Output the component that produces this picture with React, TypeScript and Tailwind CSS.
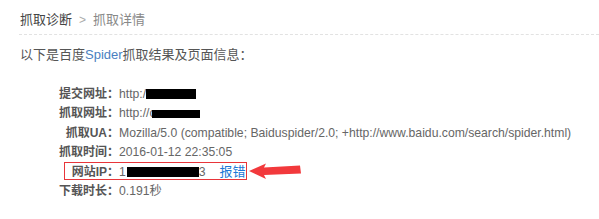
import React from "react";

const font = { fontFamily: '"Liberation Sans", Arial, "Noto Sans CJK SC", sans-serif' };

function Row({ label, children }: { label: string; children: React.ReactNode }) {
  return (
    <div className="flex h-[19.5px] items-center">
      <div className="w-[100px] shrink-0 text-right font-bold text-[12px] text-[#555]">{label}</div>
      <div className="flex items-center text-[12.2px] text-[#666] whitespace-nowrap">{children}</div>
    </div>
  );
}

export default function App() {
  return (
    <div className="w-[599px] h-[219px] bg-white overflow-hidden" style={font}>
      <div className="ml-[19px] pt-[10px] pb-[4px] border-b border-dashed border-[#e2e2e2]">
        <div className="h-[20px] flex items-center text-[13px] pl-[1px]">
          <span className="text-[#444]">抓取诊断</span>
          <span className="text-[#aaa] mx-[7px] text-[12px]">&gt;</span>
          <span className="text-[#888]">抓取详情</span>
        </div>
      </div>
      <div className="ml-[20px] mt-[10px] h-[20px] flex items-center text-[13px] text-[#555]">
        以下是百度<span className="text-[#4a7fc1]">Spider</span>抓取结果及页面信息：
      </div>
      <div className="ml-[19px] mt-[19px]">
        <Row label="提交网址：">
          <span>http:/</span>
          <span className="inline-block w-[50px] h-[10px] bg-black" />
        </Row>
        <Row label="抓取网址：">
          <span>http://c</span>
          <span className="inline-block w-[48px] h-[8px] bg-black -ml-[4px] mt-[1px]" />
        </Row>
        <Row label="抓取UA：">
          <span>Mozilla/5.0 (compatible; Baiduspider/2.0; +http://www.baidu.com/search/spider.html)</span>
        </Row>
        <Row label="抓取时间：">
          <span>2016-01-12 22:35:05</span>
        </Row>
        <div className="relative">
          <Row label="网站IP：">
            <span>1</span>
            <span className="inline-block w-[72px] h-[10px] bg-black ml-[1px]" />
            <span>3</span>
            <span className="ml-[14px] text-[13px] text-[#1c78d6]">报错</span>
          </Row>
          <div className="absolute left-[45px] top-0 w-[183px] h-[18px] border border-[#e8353a]" />
          <svg className="absolute left-[229px] top-0" width="60" height="20" viewBox="248 162 60 20">
            <polygon points="249,171 266,163.5 264,167.5 300,165.5 301,173.5 264,175 266,179" fill="#f2393c" />
          </svg>
        </div>
        <Row label="下载时长：">
          <span>0.191秒</span>
        </Row>
      </div>
    </div>
  );
}
